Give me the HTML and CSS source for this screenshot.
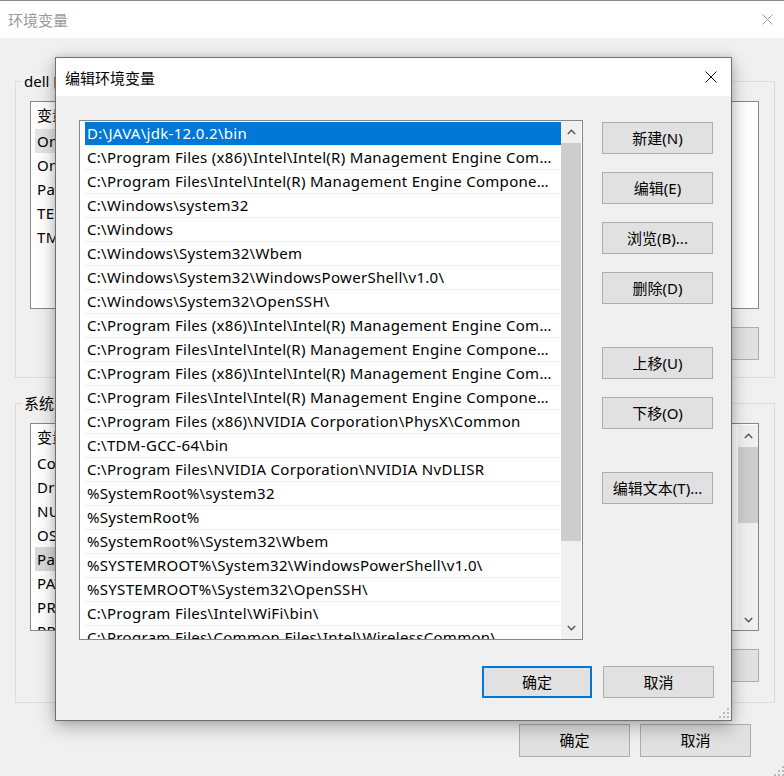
FILE: index.html
```html
<!DOCTYPE html>
<html lang="zh-CN">
<head>
<meta charset="utf-8">
<title>环境变量</title>
<link rel="stylesheet" href="styles.css">
</head>
<body>
<div class="win">
  <header class="win-title">
    <span class="win-caption">环境变量</span>
    <svg class="win-close" width="11" height="11" viewBox="0 0 11 11"><path d="M0.5 0.5L10.5 10.5M10.5 0.5L0.5 10.5" stroke="#9a9a9a" stroke-width="1" fill="none"/></svg>
  </header>
  <main class="win-body">
    <fieldset class="group group-user">
      <legend>dell 的用户变量(U)</legend>
      <div class="lv">
        <div class="lv-items">
          <div class="lv-row lv-head"><span class="c1">变量</span><span class="c2">值</span></div>
          <div class="lv-row lv-hover"><span class="c1">OneDrive</span><span class="c2">C:\Users\dell\OneDrive</span></div>
          <div class="lv-row"><span class="c1">OneDriveConsumer</span><span class="c2">C:\Users\dell\OneDrive</span></div>
          <div class="lv-row"><span class="c1">Path</span><span class="c2">C:\Users\dell\AppData\Local\Microsoft\WindowsApps;</span></div>
          <div class="lv-row"><span class="c1">TEMP</span><span class="c2">C:\Users\dell\AppData\Local\Temp</span></div>
          <div class="lv-row"><span class="c1">TMP</span><span class="c2">C:\Users\dell\AppData\Local\Temp</span></div>
        </div>
      </div>
      <div class="grp-btns">
        <button class="btn">新建(N)...</button>
        <button class="btn">编辑(E)...</button>
        <button class="btn">删除(D)</button>
      </div>
    </fieldset>
    <fieldset class="group group-sys">
      <legend>系统变量(S)</legend>
      <div class="lv">
        <div class="lv-items">
          <div class="lv-row lv-head"><span class="c1">变量</span><span class="c2">值</span></div>
          <div class="lv-row"><span class="c1">ComSpec</span><span class="c2">C:\WINDOWS\system32\cmd.exe</span></div>
          <div class="lv-row"><span class="c1">DriverData</span><span class="c2">C:\Windows\System32\Drivers\DriverData</span></div>
          <div class="lv-row"><span class="c1">NUMBER_OF_PROCESSORS</span><span class="c2">8</span></div>
          <div class="lv-row"><span class="c1">OS</span><span class="c2">Windows_NT</span></div>
          <div class="lv-row lv-sel"><span class="c1">Path</span><span class="c2">D:\JAVA\jdk-12.0.2\bin;C:\Program Files (x86)\Intel\Intel(R)...</span></div>
          <div class="lv-row"><span class="c1">PATHEXT</span><span class="c2">.COM;.EXE;.BAT;.CMD;.VBS;.VBE;.JS;.JSE;.WSF;.WSH</span></div>
          <div class="lv-row"><span class="c1">PROCESSOR_ARCHITECTURE</span><span class="c2">AMD64</span></div>
          <div class="lv-row"><span class="c1">PROCESSOR_IDENTIFIER</span><span class="c2">Intel64 Family 6 Model 142 Stepping 10</span></div>
        </div>
        <div class="sb sb-small">
          <div class="sb-btn"><svg width="9" height="6" viewBox="0 0 9 6"><path d="M0.8 5L4.5 1.3L8.2 5" stroke="#555" stroke-width="1.4" fill="none"/></svg></div>
          <div class="sb-track"><div class="sb-thumb sb-thumb-small"></div></div>
          <div class="sb-btn"><svg width="9" height="6" viewBox="0 0 9 6"><path d="M0.8 1L4.5 4.7L8.2 1" stroke="#555" stroke-width="1.4" fill="none"/></svg></div>
        </div>
      </div>
      <div class="grp-btns">
        <button class="btn">新建(W)...</button>
        <button class="btn">编辑(I)...</button>
        <button class="btn">删除(L)</button>
      </div>
    </fieldset>
  </main>
  <footer class="win-foot">
    <button class="btn">确定</button>
    <button class="btn">取消</button>
  </footer>
  <svg class="grip grip-win" width="10" height="10" viewBox="0 0 10 10"><g fill="#b9b9b9"><rect x="8" y="0" width="2" height="2"/><rect x="4" y="4" width="2" height="2"/><rect x="8" y="4" width="2" height="2"/><rect x="0" y="8" width="2" height="2"/><rect x="4" y="8" width="2" height="2"/><rect x="8" y="8" width="2" height="2"/></g></svg>
</div>

<div class="dlg">
  <header class="dlg-title">
    <span class="dlg-caption">编辑环境变量</span>
    <svg class="dlg-close" width="12" height="12" viewBox="0 0 12 12"><path d="M0.5 0.5L11.5 11.5M11.5 0.5L0.5 11.5" stroke="#111" stroke-width="1" fill="none"/></svg>
  </header>
  <div class="dlg-body">
    <div class="dlg-main">
      <div class="plist">
        <div class="plist-items">
          <div class="path path-sel">D:\JAVA\jdk-12.0.2\bin</div>
          <div class="path">C:\Program Files (x86)\Intel\Intel(R) Management Engine Components\DAL</div>
          <div class="path">C:\Program Files\Intel\Intel(R) Management Engine Components\DAL</div>
          <div class="path">C:\Windows\system32</div>
          <div class="path">C:\Windows</div>
          <div class="path">C:\Windows\System32\Wbem</div>
          <div class="path">C:\Windows\System32\WindowsPowerShell\v1.0\</div>
          <div class="path">C:\Windows\System32\OpenSSH\</div>
          <div class="path">C:\Program Files (x86)\Intel\Intel(R) Management Engine Components\IPT</div>
          <div class="path">C:\Program Files\Intel\Intel(R) Management Engine Components\IPT</div>
          <div class="path">C:\Program Files (x86)\Intel\Intel(R) Management Engine Components\DAL</div>
          <div class="path">C:\Program Files\Intel\Intel(R) Management Engine Components\DAL</div>
          <div class="path">C:\Program Files (x86)\NVIDIA Corporation\PhysX\Common</div>
          <div class="path">C:\TDM-GCC-64\bin</div>
          <div class="path">C:\Program Files\NVIDIA Corporation\NVIDIA NvDLISR</div>
          <div class="path">%SystemRoot%\system32</div>
          <div class="path">%SystemRoot%</div>
          <div class="path">%SystemRoot%\System32\Wbem</div>
          <div class="path">%SYSTEMROOT%\System32\WindowsPowerShell\v1.0\</div>
          <div class="path">%SYSTEMROOT%\System32\OpenSSH\</div>
          <div class="path">C:\Program Files\Intel\WiFi\bin\</div>
          <div class="path">C:\Program Files\Common Files\Intel\WirelessCommon\</div>
        </div>
        <div class="sb sb-big">
          <div class="sb-btn"><svg width="9" height="6" viewBox="0 0 9 6"><path d="M0.8 5L4.5 1.3L8.2 5" stroke="#555" stroke-width="1.4" fill="none"/></svg></div>
          <div class="sb-track"><div class="sb-thumb sb-thumb-big"></div></div>
          <div class="sb-btn"><svg width="9" height="6" viewBox="0 0 9 6"><path d="M0.8 1L4.5 4.7L8.2 1" stroke="#555" stroke-width="1.4" fill="none"/></svg></div>
        </div>
      </div>
      <div class="dlg-side">
        <button class="btn dbtn">新建(N)</button>
        <button class="btn dbtn">编辑(E)</button>
        <button class="btn dbtn">浏览(B)...</button>
        <button class="btn dbtn">删除(D)</button>
        <button class="btn dbtn side-sep">上移(U)</button>
        <button class="btn dbtn">下移(O)</button>
        <button class="btn dbtn side-sep">编辑文本(T)...</button>
      </div>
    </div>
    <div class="dlg-foot">
      <button class="btn dbtn btn-default">确定</button>
      <button class="btn dbtn">取消</button>
    </div>
  </div>
  <svg class="grip grip-dlg" width="10" height="10" viewBox="0 0 10 10"><g fill="#b9b9b9"><rect x="8" y="0" width="2" height="2"/><rect x="4" y="4" width="2" height="2"/><rect x="8" y="4" width="2" height="2"/><rect x="0" y="8" width="2" height="2"/><rect x="4" y="8" width="2" height="2"/><rect x="8" y="8" width="2" height="2"/></g></svg>
</div>
</body>
</html>
```

FILE: styles.css
```css
* { box-sizing: border-box; }
html, body { margin: 0; padding: 0; }
body {
  width: 784px;
  height: 776px;
  overflow: hidden;
  position: relative;
  background: #f0f0f0;
  font-family: "Noto Sans", "Noto Sans CJK SC", sans-serif;
  font-size: 15px;
  color: #000;
}

/* background window */
.win {
  width: 784px;
  height: 776px;
  border-top: 1px solid #8a8a8a;
  display: flex;
  flex-direction: column;
  position: relative;
}
.win-title {
  height: 37px;
  background: #fff;
  display: flex;
  align-items: center;
  justify-content: space-between;
  padding: 0 11px 0 8px;
}
.win-caption { color: #9a9a9a; }
.win-body { padding: 33px 9px 0 15px; }
.group {
  margin: 0;
  border: 1px solid #dcdcdc;
  padding: 10px 15px 17px 14px;
  min-width: 0;
}
.group-sys { margin-top: 15px; padding-bottom: 20px; }
.group legend {
  padding: 0 2px;
  margin-left: -8px;
  line-height: 20px;
}
.lv {
  height: 208px;
  border: 1px solid #828790;
  background: #fff;
  display: flex;
  overflow: hidden;
}
.lv-items { flex: 1; min-width: 0; overflow: hidden; }
.lv-row {
  height: 24px;
  line-height: 24px;
  display: flex;
  white-space: nowrap;
  padding-left: 6px;
  letter-spacing: 0.3px;
}
.lv-head { height: 27px; line-height: 27px; letter-spacing: 0; }
.lv-row .c1 { width: 230px; flex: none; }
.lv-hover .c1 { background: #e5e5e5; margin-left: -2px; padding-left: 2px; }
.lv-sel .c1 { background: #d9d9d9; margin-left: -2px; padding-left: 2px; }
.grp-btns {
  margin-top: 18px;
  display: flex;
  justify-content: flex-end;
  gap: 10px;
}
.btn {
  width: 111px;
  height: 33px;
  border: 1px solid #adadad;
  background: #e1e1e1;
  font: inherit;
  color: #000;
  padding: 0 0 2px;
}
.win-foot {
  margin-top: 21px;
  padding-right: 33px;
  display: flex;
  justify-content: flex-end;
  gap: 10px;
}

/* scrollbars */
.sb {
  width: 20px;
  flex: none;
  background: #f0f0f0;
  display: flex;
  flex-direction: column;
}
.sb-small { margin-top: 1px; }
.sb-btn {
  height: 21px;
  display: flex;
  align-items: center;
  justify-content: center;
}
.sb-track { flex: 1; }
.sb-thumb { background: #cdcdcd; }
.sb-thumb-small { height: 76px; margin-top: 1px; }
.sb-big { margin-right: 1px; }
.sb-big .sb-btn { height: 22px; }
.sb-thumb-big { height: 398px; }

.grip { position: absolute; }
.grip-win { right: 0; bottom: 0; }
.grip-dlg { right: 2px; bottom: 2px; }

/* dialog */
.dlg {
  position: absolute;
  left: 55px;
  top: 57px;
  width: 677px;
  height: 664px;
  border: 1px solid #707070;
  background: #f0f0f0;
  box-shadow: 0 6px 18px rgba(0, 0, 0, 0.28), 0 0 8px rgba(0, 0, 0, 0.12);
  display: flex;
  flex-direction: column;
}
.dlg-title {
  height: 38px;
  flex: none;
  background: #fff;
  display: flex;
  align-items: center;
  justify-content: space-between;
  padding: 0 14px 0 9px;
}
.dlg-body {
  flex: 1;
  padding: 24px 17px 22px 23px;
  display: flex;
  flex-direction: column;
}
.dlg-main { display: flex; gap: 19px; }
.plist {
  width: 504px;
  height: 520px;
  border: 1px solid #828790;
  background: #fff;
  display: flex;
  overflow: hidden;
}
.plist-items {
  flex: 1;
  min-width: 0;
  padding: 1px 0 0 5px;
}
.path {
  height: 24px;
  line-height: 23px;
  border-bottom: 1px solid #efefef;
  padding: 0 3px 0 2px;
  white-space: nowrap;
  overflow: hidden;
  text-overflow: ellipsis;
  letter-spacing: 0.3px;
}
.path-sel { background: #0078d7; color: #fff; }
.dlg-side {
  display: flex;
  flex-direction: column;
  gap: 18px;
  padding-top: 2px;
}
.dbtn { height: 32px; }
.side-sep { margin-top: 25px; }
.dlg-foot {
  margin-top: 26px;
  display: flex;
  justify-content: flex-end;
  gap: 11px;
}
.dlg-foot .dbtn { width: 110px; }
.dlg-foot .dbtn:last-child { width: 111px; }
.btn-default { border: 2px solid #0078d7; }
```
